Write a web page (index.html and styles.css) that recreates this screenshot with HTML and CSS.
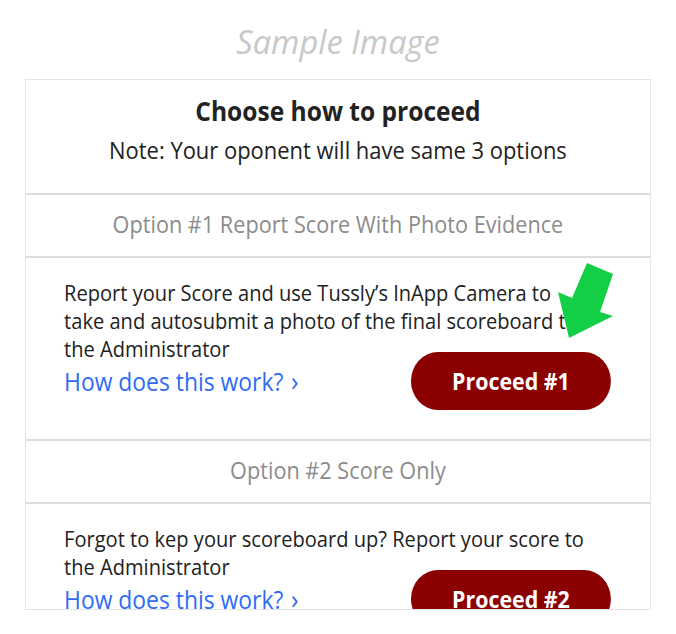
FILE: index.html
```html
<!DOCTYPE html>
<html lang="en">
<head>
<meta charset="utf-8">
<title>Choose how to proceed</title>
<link rel="stylesheet" href="styles.css">
</head>
<body>
<div class="page">
  <h1 class="sample">Sample Image</h1>
  <div class="card">
    <section class="intro">
      <h2 class="intro-title">Choose how to proceed</h2>
      <p class="intro-note">Note: Your oponent will have same 3 options</p>
    </section>
    <div class="opt-head">Option #1 Report Score With Photo Evidence</div>
    <section class="opt-body">
      <p class="opt-text">Report your Score and use Tussly’s InApp Camera to<br>take and autosubmit a photo of the final scoreboard to the Administrator</p>
      <div class="actions">
        <a class="how" href="#">How does this work? <span class="chev">›</span></a>
        <button class="proceed" type="button">Proceed #1</button>
      </div>
    </section>
    <div class="opt-head">Option #2 Score Only</div>
    <section class="opt-body">
      <p class="opt-text">Forgot to kep your scoreboard up? Report your score to the Administrator</p>
      <div class="actions">
        <a class="how" href="#">How does this work? <span class="chev">›</span></a>
        <button class="proceed" type="button">Proceed #2</button>
      </div>
    </section>
  </div>
  <svg class="arrow" width="60" height="82" viewBox="555 258 60 82" aria-hidden="true">
    <polygon points="587,263 613,274 600,312 613,316 569,338 558,292 572,298" fill="#12cf45"/>
  </svg>
</div>
</body>
</html>
```
FILE: styles.css
```css
* { box-sizing: border-box; }
html, body { margin: 0; padding: 0; background: #fff; }
body {
  font-family: "Open Sans", "Noto Sans", "Liberation Sans", sans-serif;
  color: #222;
}
.page {
  position: relative;
  width: 676px;
  height: 634px;
  overflow: hidden;
  padding-left: 25px;
}
.sample {
  margin: 0 0 0 -25px;
  height: 79px;
  padding-top: 20px;
  text-align: center;
  font-size: 32.5px;
  line-height: 44px;
  font-style: italic;
  font-weight: 400;
  color: #c8c8c8;
}
.card {
  width: 673px;
  height: 531px;
  border: 1px solid #e3e3e3;
  overflow: hidden;
  transform: scaleX(0.93);
  transform-origin: 0 0;
}
.intro {
  text-align: center;
  padding: 16px 0 29px;
  border-bottom: 2px solid #dcdcdc;
}
.intro-title {
  margin: 0;
  font-size: 26.4px;
  font-weight: 700;
  line-height: 30px;
}
.intro-note {
  margin: 10px 0 0;
  font-size: 23.6px;
  line-height: 28px;
}
.opt-head {
  height: 63px;
  line-height: 59px;
  text-align: center;
  font-size: 23.3px;
  color: #8c8c8c;
  border-bottom: 2px solid #dcdcdc;
}
.opt-body {
  padding: 21px 42px 29px 41px;
  border-bottom: 2px solid #dcdcdc;
}
.opt-text {
  margin: 0;
  font-size: 21.6px;
  line-height: 28px;
}
.actions {
  display: flex;
  align-items: center;
  justify-content: space-between;
  margin-top: -11px;
}
.how {
  color: #2f6cf5;
  text-decoration: none;
  font-size: 24.6px;
  line-height: 30px;
}
.chev {
  font-size: 27px;
  margin-left: 2px;
}
.proceed {
  width: 215px;
  height: 58px;
  border: 0;
  border-radius: 29px;
  background: #8b0000;
  color: #fff;
  font-family: inherit;
  font-size: 23px;
  font-weight: 700;
  cursor: pointer;
}
.arrow {
  position: absolute;
  left: 555px;
  top: 258px;
}
```
